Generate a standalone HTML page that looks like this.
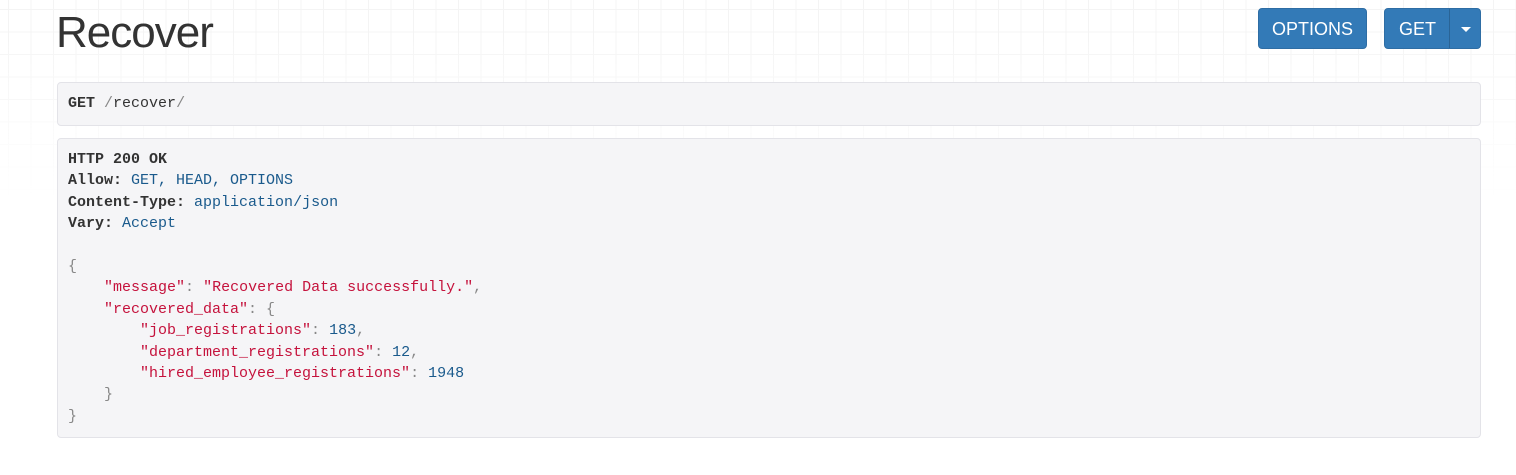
<!DOCTYPE html>
<html><head><style>
body{margin:0;width:1516px;height:475px;background:#fff;position:relative;overflow:hidden;font-family:"Liberation Sans",sans-serif}
.grid{position:absolute;left:0;top:0;width:1516px;height:200px;
background-image:linear-gradient(#eee 1px,transparent 1px),linear-gradient(90deg,#eee 1px,transparent 1px);
background-size:22.5px 22.5px;background-position:8px 9px;
-webkit-mask-image:linear-gradient(#000 20%,transparent 100%);opacity:.6}
h1{position:absolute;left:56px;top:8px;margin:0;font-weight:300;font-size:44px;color:#333;letter-spacing:-1px}
.btn{position:absolute;top:8px;height:41px;background:#337ab7;border:1px solid #2e6da4;border-radius:4px;color:#fff;font-size:18px;line-height:41px;text-align:center;box-sizing:border-box}
.panel{position:absolute;left:57px;width:1424px;background:#f5f5f7;border:1px solid #e3e3e8;border-radius:4px;box-sizing:border-box;font-family:"Liberation Mono",monospace;font-size:15px;color:#333;padding:0 10px}
pre{margin:0;font:inherit;line-height:21.4px}
b{font-weight:bold}
.v{color:#1a5a8c}.s{color:#c5123c}.p{color:#888}.n{color:#1a5a8c}
</style></head><body>
<div class="grid"></div>
<h1>Recover</h1>
<div class="btn" style="left:1258px;width:109px">OPTIONS</div>
<div class="btn" style="left:1384px;width:97px;text-align:left;padding-left:0">
<span style="display:inline-block;width:65px;text-align:center">GET</span><span style="position:absolute;left:64px;top:0;width:1px;height:39px;background:#2a6496"></span><span style="position:absolute;left:76px;top:18px;border-left:5px solid transparent;border-right:5px solid transparent;border-top:5px solid #fff"></span></div>
<div class="panel" style="top:82px;height:44px"><pre style="line-height:42px"><b>GET</b> <span class="p">/</span>recover<span class="p">/</span></pre></div>
<div class="panel" style="top:138px;height:300px;padding-top:10px"><pre><b>HTTP 200 OK</b>
<b>Allow:</b> <span class="v">GET, HEAD, OPTIONS</span>
<b>Content-Type:</b> <span class="v">application/json</span>
<b>Vary:</b> <span class="v">Accept</span>

<span class="p">{</span>
    <span class="s">"message"</span><span class="p">:</span> <span class="s">"Recovered Data successfully."</span><span class="p">,</span>
    <span class="s">"recovered_data"</span><span class="p">: {</span>
        <span class="s">"job_registrations"</span><span class="p">:</span> <span class="n">183</span><span class="p">,</span>
        <span class="s">"department_registrations"</span><span class="p">:</span> <span class="n">12</span><span class="p">,</span>
        <span class="s">"hired_employee_registrations"</span><span class="p">:</span> <span class="n">1948</span>
    <span class="p">}</span>
<span class="p">}</span></pre></div>
</body></html>
